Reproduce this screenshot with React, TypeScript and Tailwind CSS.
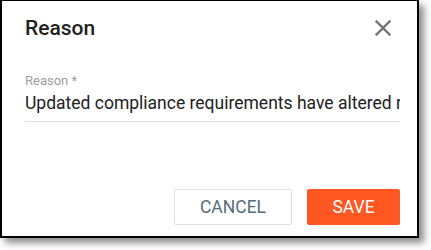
import React from "react";

const CloseIcon = () => (
  <svg width="28" height="28" viewBox="0 0 24 24" fill="#757575">
    <path d="M19 6.41 17.59 5 12 10.59 6.41 5 5 6.41 10.59 12 5 17.59 6.41 19 12 13.41 17.59 19 19 17.59 13.41 12z" />
  </svg>
);

export default function App() {
  return (
    <div className="w-[431px] h-[250px] bg-white font-['Roboto',sans-serif]">
      <div className="w-[419px] h-[238px] border-2 border-t border-black bg-white shadow-[5px_5px_7px_rgba(0,0,0,0.45)] flex flex-col">
        <div className="flex items-center justify-between pl-[23px] pr-[20px] pt-[12px]">
          <h2 className="text-[21px] font-medium text-[#212121] leading-[30px]">Reason</h2>
          <button className="w-[28px] h-[28px] flex items-center justify-center">
            <CloseIcon />
          </button>
        </div>
        <div className="pl-[23px] pr-[17px] pt-[30px]">
          <label className="block text-[13px] leading-[16px] text-[#9e9e9e]">Reason *</label>
          <div className="overflow-hidden whitespace-nowrap border-b border-[#e0e0e0] pt-[3px] pb-[7px] text-[17.5px] leading-[22px] text-[#212121]">
            Updated compliance requirements have altered requirements for this item
          </div>
        </div>
        <div className="flex justify-end gap-[15px] pr-[17px] mt-auto pb-[11px]">
          <button className="w-[118px] h-[36px] border border-[#e0e0e0] rounded-[2px] text-[17.5px] text-[#546e7a] bg-white">
            CANCEL
          </button>
          <button className="w-[93px] h-[36px] rounded-[2px] text-[17.5px] text-white bg-[#ff5722]">
            SAVE
          </button>
        </div>
      </div>
    </div>
  );
}
